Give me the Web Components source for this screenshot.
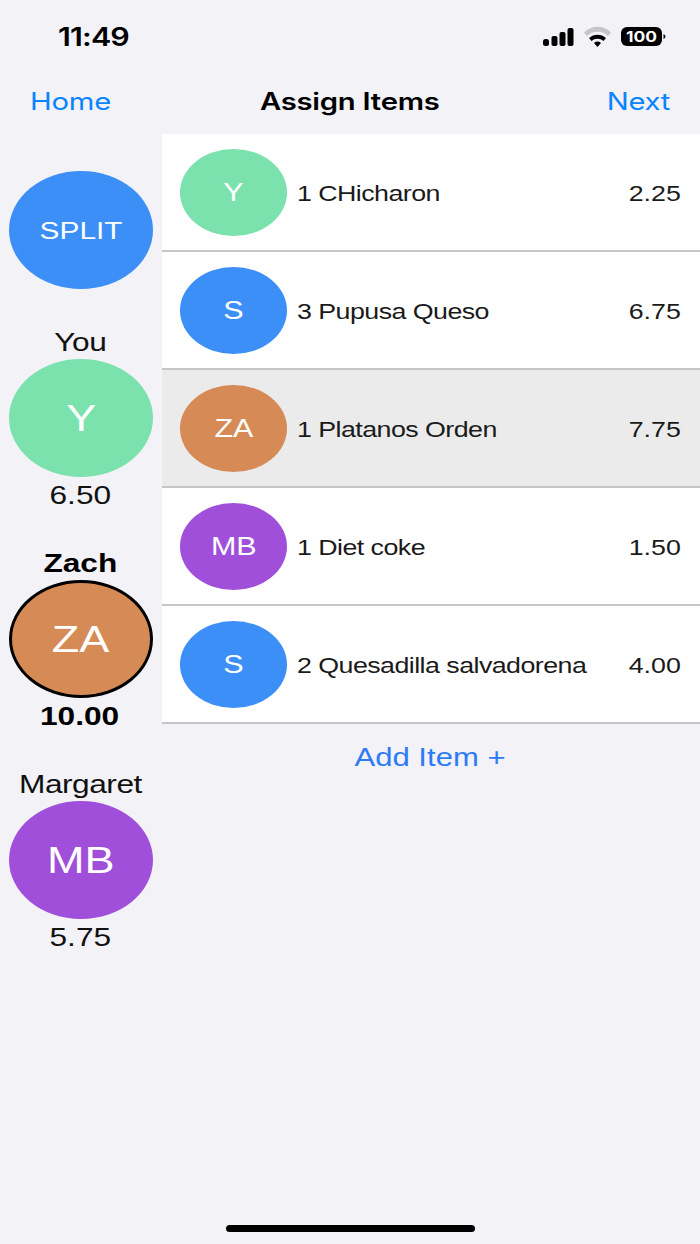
<!DOCTYPE html>
<html><head><meta charset="utf-8">
<style>
html,body{margin:0;padding:0}
body{width:700px;height:1244px;background:#f2f2f7;font-family:"Liberation Sans",Arial,sans-serif;overflow:hidden;color:#000}
</style></head><body>
<split-app></split-app>
<script>
const wide=`.w{display:inline-block;transform:scaleX(1.218);white-space:nowrap}`;
class StatusBar extends HTMLElement{constructor(){super();this.attachShadow({mode:'open'}).innerHTML=`<style>${wide}
:host{display:flex;height:73px;box-sizing:border-box;padding:0 32px 0 58px;justify-content:space-between;align-items:center}
.t{font:600 25px Inter,sans-serif;transform-origin:left center;letter-spacing:-.7px}
.r{display:flex;align-items:center;gap:0}
svg{display:block}
</style><span class="w t">11:49</span><div class="r"><svg width="125" height="24" viewBox="0 0 125 24">
<rect x="0" y="14" width="6" height="7" rx="2.5"/><rect x="8.5" y="11" width="6" height="10" rx="2"/><rect x="16.5" y="7" width="6" height="14" rx="2"/><rect x="24.5" y="3" width="6" height="18" rx="2"/>
<path d="M41 7.5 A19 19 0 0 1 68 7.5 L65 11 A15 15 0 0 0 44 11Z" fill="#c6c6c9"/>
<path d="M46 13 A12.5 12.5 0 0 1 63 13 L60.5 16 A9 9 0 0 0 48.5 16Z"/><path d="M51 18 A5.5 5.5 0 0 1 58 18 L54.5 22Z"/>
<rect x="78" y="2" width="41" height="19" rx="6"/>
<path d="M120.500 9v5a3 3 0 0 0 2-2.500a3 3 0 0 0-2-2.500z"/>
<text x="98.500" y="17" text-anchor="middle" font-family="Inter,sans-serif" font-weight="700" font-size="14.500" fill="#fff" textLength="31" lengthAdjust="spacingAndGlyphs">100</text></svg></div>`}}
class NavBar extends HTMLElement{constructor(){super();this.attachShadow({mode:'open'}).innerHTML=`<style>${wide}
:host{display:grid;grid-template-columns:1fr auto 1fr;align-items:center;height:61px;box-sizing:border-box;padding:0 30px 4px;font:400 24px Inter,sans-serif;letter-spacing:-.2px}
.l{color:#0a84ff;transform-origin:left center;justify-self:start}
.n{color:#0a84ff;transform-origin:right center;justify-self:end}
.c{font-weight:600}
</style><span class="w l">Home</span><span class="w c">Assign Items</span><span class="w n">Next</span>`}}
class OvalAvatar extends HTMLElement{
constructor(){super();this.attachShadow({mode:'open'}).innerHTML=`<style>${wide}
:host{display:flex;align-items:center;justify-content:center;width:var(--ow,144px);height:var(--oh,118px);border-radius:50%;box-sizing:border-box;color:#fff;font-size:var(--fs,37px);font-weight:400;letter-spacing:0;flex:none;padding-top:1px}
</style><span class="w"><slot></slot></span>`}
connectedCallback(){this.style.background=this.getAttribute('c');if(this.hasAttribute('sel'))this.style.border='3.5px solid #000'}}
class PersonCard extends HTMLElement{constructor(){super();this.attachShadow({mode:'open'}).innerHTML=`<style>${wide}
:host{display:flex;flex-direction:column;align-items:center;font-size:26px;margin-top:39px;color:#111}
:host([sel]){font-weight:700;color:#000}
.n{height:28px;line-height:22px;letter-spacing:-.4px;padding-right:2px}.a{height:36px;line-height:36px;padding-right:2px}
:host([sel]) .n{letter-spacing:0}
</style><div class="n"><span class="w" id="n"></span></div><slot></slot><div class="a"><span class="w" id="a"></span></div>`}
connectedCallback(){this.shadowRoot.getElementById('n').textContent=this.getAttribute('name');this.shadowRoot.getElementById('a').textContent=this.getAttribute('amt')}}
class ItemRow extends HTMLElement{constructor(){super();this.attachShadow({mode:'open'}).innerHTML=`<style>${wide}
:host{display:flex;align-items:center;height:118px;box-sizing:border-box;background:#fff;border-bottom:2px solid #c6c6c8;padding:0 19px 0 18px;font-size:22px;color:#1a1a1a;--ow:107px;--oh:87px;--fs:25px}
:host([sel]){background:#ebebeb}
.d{flex:1;margin-left:10px;letter-spacing:-.45px;padding-top:3px}
.p{padding-top:3px}
.d .w{transform-origin:left center}.p .w{transform-origin:right center}
</style><slot></slot><div class="d"><span class="w" id="d"></span></div><div class="p"><span class="w" id="p"></span></div>`}
connectedCallback(){this.shadowRoot.getElementById('d').textContent=this.getAttribute('desc');this.shadowRoot.getElementById('p').textContent=this.getAttribute('price')}}
class SplitApp extends HTMLElement{constructor(){super();this.attachShadow({mode:'open'}).innerHTML=`<style>${wide}
:host{display:block;height:1244px;position:relative}
.main{display:flex}
.side{width:162px;flex:none;display:flex;flex-direction:column;align-items:center;padding-top:37px;box-sizing:border-box}
.side .sp{margin-bottom:3px}
.sp{--fs:24.500px}
.list{flex:1}
.add{text-align:center;color:#2f7bf6;font-size:25.500px;height:66px;line-height:66px;padding-right:2px}
.home{position:absolute;left:226px;bottom:12px;width:249px;height:7px;border-radius:4px;background:#000}
</style><status-bar></status-bar><nav-bar></nav-bar><div class="main"><div class="side">
<oval-avatar class="sp" c="#3d8ff8">SPLIT</oval-avatar>
<person-card name="You" amt="6.50"><oval-avatar c="#7be2ae">Y</oval-avatar></person-card>
<person-card name="Zach" amt="10.00" sel><oval-avatar c="#d68b56" sel>ZA</oval-avatar></person-card>
<person-card name="Margaret" amt="5.75"><oval-avatar c="#a04fdb">MB</oval-avatar></person-card>
</div><div class="list">
<item-row desc="1 CHicharon" price="2.25"><oval-avatar c="#7be2ae">Y</oval-avatar></item-row>
<item-row desc="3 Pupusa Queso" price="6.75"><oval-avatar c="#3d8ff8">S</oval-avatar></item-row>
<item-row desc="1 Platanos Orden" price="7.75" sel><oval-avatar c="#d68b56">ZA</oval-avatar></item-row>
<item-row desc="1 Diet coke" price="1.50"><oval-avatar c="#a04fdb">MB</oval-avatar></item-row>
<item-row desc="2 Quesadilla salvadorena" price="4.00"><oval-avatar c="#3d8ff8">S</oval-avatar></item-row>
<div class="add"><span class="w">Add Item +</span></div>
</div></div><div class="home"></div>`}}
customElements.define('status-bar',StatusBar);customElements.define('nav-bar',NavBar);customElements.define('oval-avatar',OvalAvatar);customElements.define('person-card',PersonCard);customElements.define('item-row',ItemRow);customElements.define('split-app',SplitApp);
</script></body></html>
